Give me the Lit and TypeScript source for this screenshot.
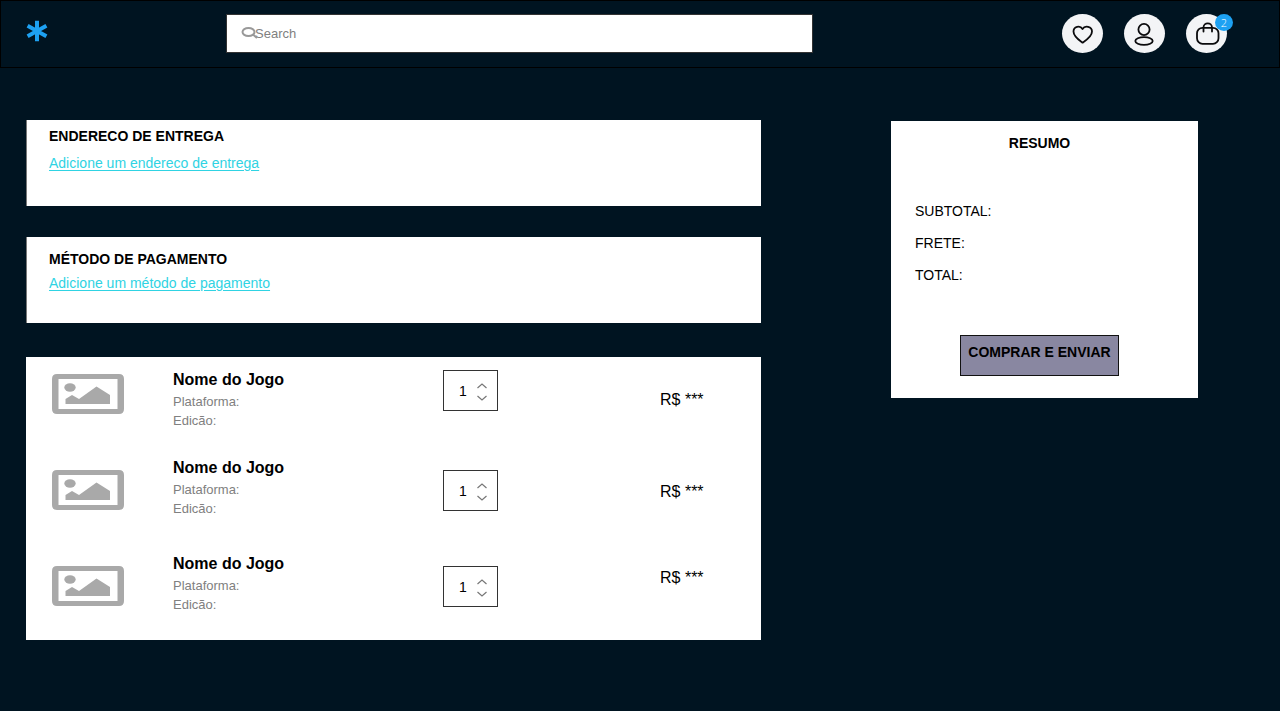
import { LitElement, css, html, svg } from "lit";
import { customElement, property, state } from "lit/decorators.js";

const heart = svg`<path d="M20.5 28.700 C17 26 11.500 22.500 11.500 17.500 C11.500 12.500 18 10.800 20.500 15 C23 10.800 30 12.500 30 17.500 C30 22.500 24.500 26 20.500 28.700 Z"/>`;
const person = svg`<circle cx="20" cy="15.500" r="5.600"/><ellipse cx="20" cy="27" rx="8.700" ry="3.900"/>`;
const bag = svg`<rect x="11" y="13.800" width="21.500" height="16" rx="5.500"/><path d="M17.500 17.500 V13.500 C17.500 8 26 8 26 13.500 V17.500"/>`;

@customElement("icon-button")
class IconButton extends LitElement {
  static styles = css`
    :host { display: block; position: relative; }
    .round {
      display: block; width: 41px; height: 39px; padding: 0; border: 0;
      border-radius: 50%; background: #f3f4f6; cursor: pointer;
    }
    .glyph { display: block; width: 41px; height: 39px; fill: none; stroke: #0b0b0d; stroke-width: 1.8; stroke-linejoin: round; stroke-linecap: round; }
    .badge {
      position: absolute; top: 0; right: -6px; width: 18px; height: 17px;
      border-radius: 50%; background: #1da1f2; color: #fff;
      font: 300 11px/18px "Open Sans", "Noto Sans", sans-serif; text-align: center;
    }
  `;
  @property() label = "";
  @property({ attribute: false }) glyph: unknown;
  @property({ type: Number }) count = 0;

  render() {
    return html`
      <button class="round" type="button" aria-label=${this.label}>
        <svg class="glyph" viewBox="0 0 41 39" aria-hidden="true">${this.glyph}</svg>
      </button>
      ${this.count ? html`<span class="badge">${this.count}</span>` : ""}
    `;
  }
}

@customElement("quantity-box")
class QuantityBox extends LitElement {
  static styles = css`
    :host { display: block; }
    .box {
      display: flex; align-items: center; box-sizing: border-box;
      width: 55px; height: 41px; padding-left: 15px; border: 1px solid #333; background: #fff;
    }
    .value {
      width: 18px; padding: 0; border: 0; background: none; appearance: textfield;
      font: 14px/16px "Liberation Sans", Arial, sans-serif; color: #000; outline: none;
    }
    .value::-webkit-inner-spin-button { appearance: none; margin: 0; }
    .steps { display: flex; flex-direction: column; gap: 4px; padding-top: 2px; }
    .step { display: block; padding: 0; border: 0; background: none; height: 8px; cursor: pointer; }
    .chevron { display: block; width: 10px; height: 8px; fill: none; stroke: #777; stroke-width: 1.2; }
  `;
  @property() label = "";
  @state() private amount = 1;

  private change(by: number) {
    this.amount = Math.max(1, this.amount + by);
  }

  render() {
    return html`
      <div class="box">
        <input class="value" type="number" min="1" aria-label=${this.label} .value=${String(this.amount)}
          @change=${(e: Event) => (this.amount = Math.max(1, Number((e.target as HTMLInputElement).value)))} />
        <div class="steps">
          <button class="step" type="button" aria-label="Aumentar" @click=${() => this.change(1)}>
            <svg class="chevron" viewBox="0 0 10 8"><path d="M.5 6 L5 2 L9.500 6"/></svg>
          </button>
          <button class="step" type="button" aria-label="Diminuir" @click=${() => this.change(-1)}>
            <svg class="chevron" viewBox="0 0 10 8"><path d="M.5 2 L5 6 L9.500 2"/></svg>
          </button>
        </div>
      </div>
    `;
  }
}

interface Game { name: string; price: string; }

@customElement("app-root")
class AppRoot extends LitElement {
  static styles = css`
    :host {
      display: block; min-height: 100vh; background: #001421; color: #000;
      font: 14px/16px "Liberation Sans", Arial, sans-serif;
    }
    h2, h3, p { margin: 0; font-size: inherit; }
    .header {
      display: grid; grid-template-columns: 200px minmax(0, 586fr) minmax(20px, 249fr) auto;
      box-sizing: border-box; min-height: 68px; padding: 13px 52px 13px 25px; border: 1px solid #000;
    }
    .logo { justify-self: start; display: block; height: 22px; padding-top: 6px; }
    .logo-mark { display: block; width: 22px; height: 22px; stroke: #1da1f2; stroke-width: 4; }
    .search { position: relative; height: 39px; }
    .search-icon { position: absolute; left: 15px; top: 12px; width: 18px; height: 14px; fill: none; stroke: #999; stroke-width: 2; }
    .search-field {
      box-sizing: border-box; width: 100%; height: 39px; padding: 0 12px 0 28px;
      border: 1px solid #333; border-radius: 0; background: #fff; outline: none; font: 13px/16px "Liberation Sans", Arial, sans-serif;
    }
    .search-field::placeholder { color: #808080; opacity: 1; }
    .actions { grid-column: 4; display: flex; gap: 21px; }
    .main {
      display: grid; grid-template-columns: minmax(0, 735fr) minmax(0, 307fr);
      column-gap: 130px; align-items: start; padding: 52px 82px 40px 26px;
    }
    .left { display: flex; flex-direction: column; gap: 31px; }
    .panel {
      display: flex; flex-direction: column; align-items: flex-start; box-sizing: border-box;
      min-height: 86px; padding: 8px 22px; border-left: 1px solid #777; background: #fff;
    }
    .address { gap: 11px; }
    .payment { gap: 8px; padding-top: 14px; }
    .link { color: #2fd3e3; text-decoration: underline; text-underline-offset: 2px; }
    .items {
      display: grid; grid-template-columns: 121fr 270fr 217fr 101fr;
      box-sizing: border-box; min-height: 283px; margin-top: 3px; padding: 0 0 20px 26px; background: #fff;
    }
    .column { display: grid; align-content: start; }
    .pictures { grid-template-rows: 96px 96px auto; padding-top: 17px; }
    .details { grid-template-rows: 88px 96px auto; padding-top: 11px; }
    .amounts { grid-template-rows: 100px 96px auto; padding-top: 13px; }
    .prices { grid-template-rows: 92px 86px auto; padding-top: 33px; font-size: 16px; line-height: 20px; }
    .picture { display: block; width: 72px; height: 40px; fill: #a9a9a9; }
    .name { font-size: 16px; line-height: 24px; }
    .meta { font-size: 13px; line-height: 19px; color: #808080; }
    .summary {
      display: flex; flex-direction: column; box-sizing: border-box; min-height: 277px;
      margin-top: 1px; padding: 14px 10px 22px 0; background: #fff;
    }
    .summary-title { text-align: center; }
    .totals { display: flex; flex-direction: column; gap: 16px; padding: 52px 0 52px 24px; }
    .buy {
      align-self: center; width: 159px; height: 41px; padding: 0 0 8px; border: 1px solid #111;
      background: #8987a1; color: #000; font: bold 14px/16px "Liberation Sans", Arial, sans-serif; white-space: nowrap; cursor: pointer;
    }
  `;

  private games: Game[] = [
    { name: "Nome do Jogo", price: "R$ ***" },
    { name: "Nome do Jogo", price: "R$ ***" },
    { name: "Nome do Jogo", price: "R$ ***" },
  ];

  render() {
    return html`
      <header class="header">
        <a class="logo" href="#" aria-label="Início">
          <svg class="logo-mark" viewBox="0 0 22 22"><path d="M11 .7 V21.300 M1.600 5.800 L20.400 16.200 M20.400 5.800 L1.600 16.200"/></svg>
        </a>
        <div class="search">
          <input class="search-field" type="text" placeholder="Search" aria-label="Search" />
          <svg class="search-icon" viewBox="0 0 18 14" aria-hidden="true"><ellipse cx="7.500" cy="6" rx="6" ry="4"/><path d="M12 8.500 L16 12"/></svg>
        </div>
        <nav class="actions">
          <icon-button label="Favoritos" .glyph=${heart}></icon-button>
          <icon-button label="Conta" .glyph=${person}></icon-button>
          <icon-button label="Carrinho" .glyph=${bag} count="2"></icon-button>
        </nav>
      </header>
      <main class="main">
        <div class="left">
          <section class="panel address">
            <h2>ENDERECO DE ENTREGA</h2>
            <a class="link" href="#">Adicione um endereco de entrega</a>
          </section>
          <section class="panel payment">
            <h2>MÉTODO DE PAGAMENTO</h2>
            <a class="link" href="#">Adicione um método de pagamento</a>
          </section>
          <section class="items">
            <div class="column pictures">
              ${this.games.map(() => html`
                <svg class="picture" viewBox="0 0 72 40" aria-hidden="true">
                  <path fill-rule="evenodd" d="M5 0 H67 Q72 0 72 5 V35 Q72 40 67 40 H5 Q0 40 0 35 V5 Q0 0 5 0 Z M6.500 5 V35 H65.500 V5 Z"/>
                  <ellipse cx="18" cy="13.500" rx="5.700" ry="4.200"/>
                  <path d="M13.500 30 V25 L20 21 L27 25 L44.500 12.500 L58 21 V30 Z"/>
                </svg>`)}
            </div>
            <div class="column details">
              ${this.games.map((g) => html`
                <div>
                  <h3 class="name">${g.name}</h3>
                  <p class="meta">Plataforma:</p>
                  <p class="meta">Edicão:</p>
                </div>`)}
            </div>
            <div class="column amounts">
              ${this.games.map(() => html`<quantity-box label="Quantidade"></quantity-box>`)}
            </div>
            <div class="column prices">
              ${this.games.map((g) => html`<p>${g.price}</p>`)}
            </div>
          </section>
        </div>
        <aside class="summary">
          <h2 class="summary-title">RESUMO</h2>
          <div class="totals">
            <p>SUBTOTAL:</p>
            <p>FRETE:</p>
            <p>TOTAL:</p>
          </div>
          <button class="buy" type="button">COMPRAR E ENVIAR</button>
        </aside>
      </main>
    `;
  }
}
